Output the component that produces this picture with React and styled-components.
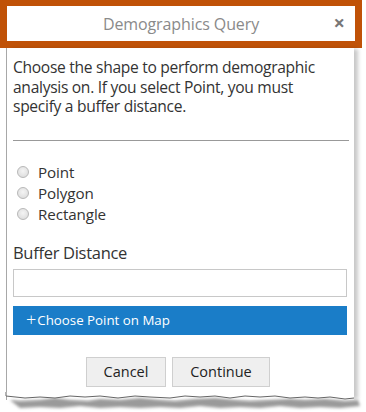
import React from 'react';
import styled, { createGlobalStyle } from 'styled-components';

const GlobalStyle = createGlobalStyle`
	html, body {
		margin: 0;
		padding: 0;
		background: #fff;
	}
	body {
		font-family: 'Open Sans', 'Liberation Sans', sans-serif;
		color: #333;
	}
`;

const Page = styled.div`
	width: 366px;
	height: 412px;
	overflow: hidden;
	position: relative;
`;

const HeaderFrame = styled.div`
	width: 362px;
	box-sizing: border-box;
	border: 7px solid #c05207;
	border-top-width: 6px;
	height: 48px;
	display: flex;
	align-items: center;
	justify-content: center;
	position: relative;
	background: #fff;
	.title {
		font-size: 16px;
		color: #8a8a8a;
		letter-spacing: -0.1px;
	}
	.close {
		position: absolute;
		right: 10px;
		top: 6px;
		color: #777;
		font-size: 20px;
		font-weight: bold;
		line-height: 22px;
	}
`;

const Body = styled.div`
	margin-left: 6px;
	width: 348px;
	box-sizing: border-box;
	border-left: 1px solid #a8a8a8;
	box-shadow: 5px 0 4px -1px rgba(0, 0, 0, 0.22);
	padding: 10px 7px 0 6px;
	height: 352px;
	background: #fff;
	position: relative;
`;

const Intro = styled.p`
	margin: 0;
	max-width: 312px;
	font-size: 15.6px;
	line-height: 19.5px;
	letter-spacing: -0.3px;
`;

const Rule = styled.hr`
	margin: 23px 0 0 0;
	border: none;
	border-top: 1px solid #999;
	width: 336px;
`;

const Options = styled.div`
	margin-top: 22px;
	display: flex;
	flex-direction: column;
	gap: 2px;
`;

const Option = styled.label`
	display: flex;
	align-items: center;
	gap: 9px;
	font-size: 15.2px;
	line-height: 19px;
	letter-spacing: -0.1px;
	padding-left: 4px;
	.dot {
		width: 10px;
		height: 10px;
		border-radius: 50%;
		border: 1px solid #b8b8b8;
		background: radial-gradient(circle at 50% 40%, #f4f4f4, #d8d8d8);
	}
`;

const FieldLabel = styled.div`
	margin-top: 18px;
	font-size: 16.5px;
	line-height: 22px;
	letter-spacing: -0.3px;
`;

const Input = styled.div`
	margin-top: 5px;
	height: 28px;
	box-sizing: border-box;
	border: 1px solid #c8c8c8;
	width: 334px;
`;

const MapButton = styled.div`
	margin-top: 9px;
	height: 29px;
	width: 334px;
	background: #1a7dc8;
	color: #fff;
	display: flex;
	align-items: center;
	padding-left: 13px;
	box-sizing: border-box;
	font-size: 13.3px;
	gap: 1px;
	.plus {
		font-size: 18px;
		font-weight: 300;
		line-height: 1;
		margin-top: -2px;
	}
`;

const Actions = styled.div`
	margin-top: 22px;
	display: flex;
	justify-content: center;
	gap: 6px;
	padding-right: 4px;
`;

const Button = styled.div`
	height: 30px;
	width: ${(p) => p.w}px;
	box-sizing: border-box;
	background: #efefef;
	border: 1px solid #cfcfcf;
	display: flex;
	align-items: center;
	justify-content: center;
	font-size: 14.5px;
	color: #222;
`;

const Torn = styled.svg`
	position: absolute;
	left: 0;
	top: 392px;
	display: block;
`;

const App = () => {
	return (
		<Page>
			<GlobalStyle />
			<HeaderFrame>
				<span className="title">Demographics Query</span>
				<span className="close">×</span>
			</HeaderFrame>
			<Body>
				<Intro>
					Choose the shape to perform demographic analysis on. If you select Point, you must specify a buffer
					distance.
				</Intro>
				<Rule />
				<Options>
					{['Point', 'Polygon', 'Rectangle'].map((o) => (
						<Option key={o}>
							<span className="dot" />
							{o}
						</Option>
					))}
				</Options>
				<FieldLabel>Buffer Distance</FieldLabel>
				<Input />
				<MapButton>
					<span className="plus">+</span>Choose Point on Map
				</MapButton>
				<Actions>
					<Button w={80}>Cancel</Button>
					<Button w={98}>Continue</Button>
				</Actions>
			</Body>
			<Torn width="366" height="20" viewBox="0 0 366 20">
				<defs>
					<filter id="sh" x="-5%" y="-50%" width="110%" height="200%">
						<feGaussianBlur stdDeviation="1.8" />
					</filter>
				</defs>
				<path
					d="M10 8 L20 9 L40 8 L55 6 L70 8 L88 9 L100 7 L120 8 L140 6 L160 8 L175 9 L195 7 L215 6 L235 8 L250 9 L270 8 L290 7 L305 8 L325 7 L345 9 L358 8 L360 14 L340 16 L320 15 L300 16 L280 14 L260 16 L240 15 L220 16 L200 14 L180 16 L160 15 L140 16 L120 15 L100 16 L80 14 L60 16 L40 15 L20 16 Z"
					fill="#9a9a9a"
					filter="url(#sh)"
				/>
				<path
					d="M6 0 L354 0 L354 6 L345 7 L330 5 L318 6 L305 5 L290 6 L275 4 L260 5 L245 4 L230 6 L215 4 L200 5 L185 4 L170 6 L150 5 L135 4 L118 6 L100 4 L85 5 L70 4 L55 6 L40 5 L25 6 L6 4 Z"
					fill="#fff"
				/>
				<path
					d="M6 0 L6 4 L25 6 L40 5 L55 6 L70 4 L85 5 L100 4 L118 6 L135 4 L150 5 L170 6 L185 4 L200 5 L215 4 L230 6 L245 4 L260 5 L275 4 L290 6 L305 5 L318 6 L330 5 L345 7 L354 6"
					fill="none"
					stroke="#666"
					strokeWidth="1"
				/>
			</Torn>
		</Page>
	);
};

export default App;
